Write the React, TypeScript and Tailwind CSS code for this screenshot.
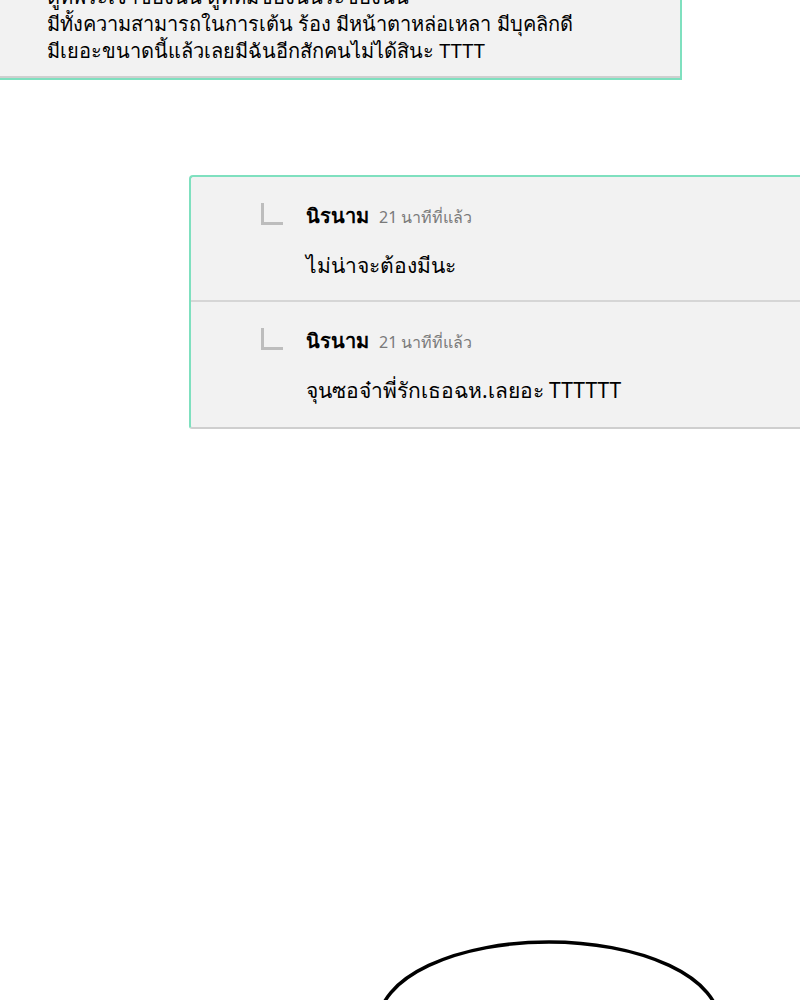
import React from "react";

const font = { fontFamily: '"Noto Sans", "DejaVu Sans", sans-serif' };

function Reply({ text, last }: { text: string; last?: boolean }) {
  return (
    <div className={`flex h-[125px] pl-[70px] pt-[25px] ${last ? "" : "border-b-2 border-[#d6d6d6]"}`}>
      <div className="w-[22px] h-[22px] border-l-[3px] border-b-[3px] border-[#bdbdbd] mt-[1px]" />
      <div className="ml-[23px] flex flex-col">
        <div className="flex items-baseline gap-[10px]">
          <span className="text-[20px] font-bold text-black leading-[28px]">นิรนาม</span>
          <span className="text-[16px] text-[#7a7a7a] leading-[28px]">21 นาทีที่แล้ว</span>
        </div>
        <div className="mt-[20px] text-[21px] text-black leading-[28px]">{text}</div>
      </div>
    </div>
  );
}

export default function App() {
  return (
    <div className="w-[800px] h-[1000px] bg-white overflow-hidden relative" style={font}>
      <div className="w-[682px] -mt-[17px] bg-[#f2f2f2] border-r-2 border-b-2 border-[#7fe0bf] pl-[47px] pb-[14px] shadow-[inset_0_-2px_0_#cfcfcf]">
        <div className="text-[20px] leading-[27px] text-black">
          <div>ดูที่พระเจ้าของนั้น ดูที่ทีมของนั้นระของนั้น</div>
          <div>มีทั้งความสามารถในการเต้น ร้อง มีหน้าตาหล่อเหลา มีบุคลิกดี</div>
          <div>มีเยอะขนาดนี้แล้วเลยมีฉันอีกสักคนไม่ได้สินะ TTTT</div>
        </div>
      </div>
      <div className="ml-[189px] mt-[95px] bg-[#f2f2f2] border-l-2 border-t-2 border-[#7fe0bf] rounded-tl-[4px] border-b-2 border-b-[#cfcfcf] rounded-bl-[3px]">
        <Reply text="ไม่น่าจะต้องมีนะ" />
        <Reply text="จุนซอจ๋าพี่รักเธอฉห.เลยอะ TTTTTT" last />
      </div>
      <div className="flex justify-center pl-[298px] mt-[510px]">
        <svg width="344" height="120" viewBox="0 0 344 120">
          <ellipse cx="172" cy="83" rx="170" ry="80" fill="none" stroke="#000" strokeWidth="3.5" />
        </svg>
      </div>
    </div>
  );
}
